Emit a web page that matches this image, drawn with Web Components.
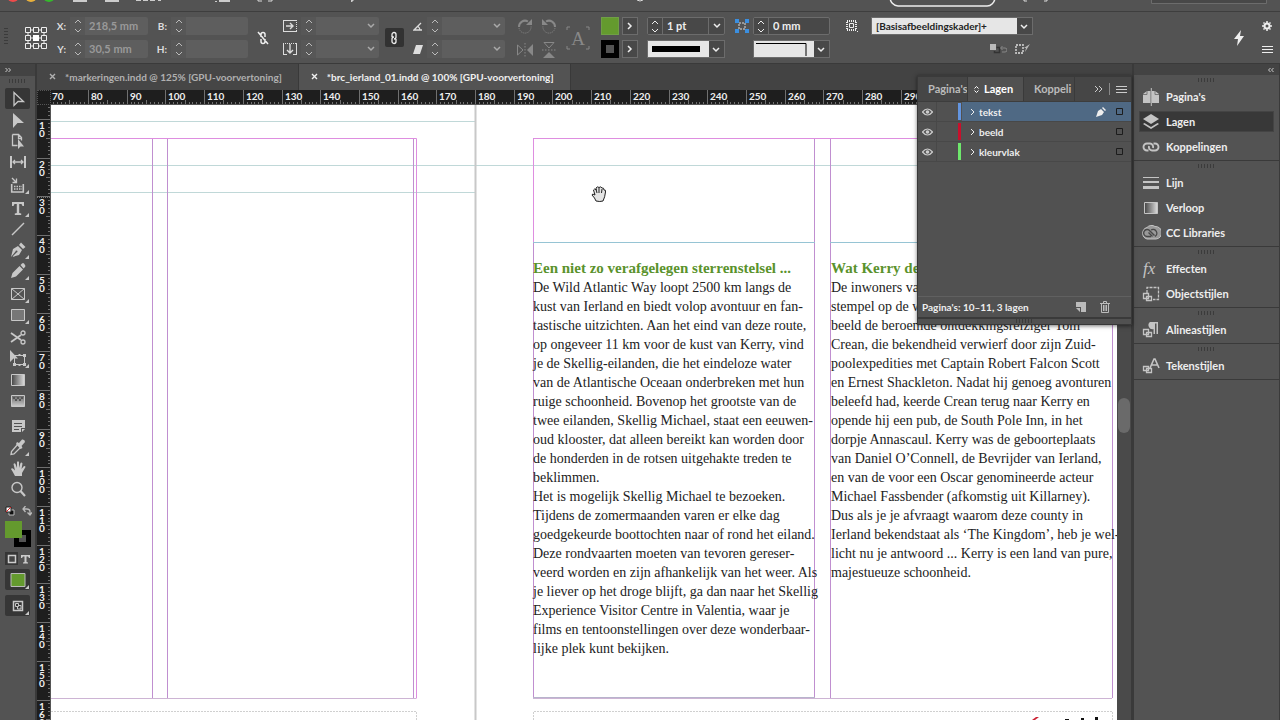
<!DOCTYPE html>
<html lang="nl">
<head>
<meta charset="utf-8">
<title>brc_ierland_01.indd</title>
<style>
html,body{margin:0;height:100%}
body{font:700 10px/14px Lato,"Open Sans",sans-serif;color:#eee;background:#535353;overflow:hidden}
</style>
</head>
<body>
<layout-app></layout-app>
<script>
const base = `*{box-sizing:border-box}button,input,select{font:inherit;color:inherit;margin:0;padding:0;border:0;background:none;border-radius:0;outline:0}button{display:flex;align-items:center;justify-content:center}svg{display:block}`;
const define = (name, render, after) => customElements.define(name, class extends HTMLElement {
  connectedCallback() {
    if (this.shadowRoot) return;
    const root = this.attachShadow({ mode: 'open' });
    root.innerHTML = render(this);
    if (after) after(root, this);
  }
});

/* name: [width, height, markup]; shapes use currentColor */
const S = 'fill="none" stroke="currentColor"';
const F = 'fill="currentColor"';
const icons = {
  ref: [24, 24, `<g ${S}><path d="M7 4h2M15 4h2M7 20h2M15 20h2M4 7v2M4 15v2M20 7v2M20 15v2M7 12h2M15 12h2" /><path d="M1.500 1.500h5v5h-5zM9.500 1.500h5v5h-5zM17.500 1.500h5v5h-5zM1.500 9.500h5v5h-5zM17.500 9.500h5v5h-5zM1.500 17.500h5v5h-5zM9.500 17.500h5v5h-5zM17.500 17.500h5v5h-5z"/></g><path fill="#fff" d="M9 9h6v6H9z"/>`],
  up: [8, 5, `<path d="M1 4l3-3 3 3" ${S}/>`],
  down: [8, 5, `<path d="M1 1l3 3 3-3" ${S}/>`],
  caret: [8, 6, `<path d="M1 1l3 3 3-3" ${S} stroke-width="1.500"/>`],
  right: [6, 8, `<path d="M1 1l3 3-3 3" ${S} stroke-width="1.500"/>`],
  thin: [5, 8, `<path d="M1 1l3 3-3 3" ${S}/>`],
  dright: [9, 8, `<path d="M1 1l3 3-3 3M5 1l3 3-3 3" ${S}/>`],
  dleft: [8, 6, `<path d="M3.500 1l-2 2 2 2M6.500 1l-2 2 2 2" ${S}/>`],
  menu: [11, 9, `<path d="M0 1.500h11M0 4.500h11M0 7.500h11" ${S}/>`],
  unlink: [12, 14, `<path d="M4 6V3.500a2 2 0 0 1 4 0V6M4 8v2.500a2 2 0 0 0 4 0V8M1 1l10 12" ${S} stroke-width="1.500"/>`],
  link: [8, 14, `<path d="M2 6V3.500a2 2 0 0 1 4 0V6a2 2 0 0 1-2 2M6 8v2.500a2 2 0 0 1-4 0V8a2 2 0 0 1 2-2" ${S} stroke-width="1.300"/>`],
  scalex: [14, 12, `<path d="M0 .5h14M0 11.500h14M.5 0v12" ${S}/><path d="M13.500 2v9" ${S} stroke-dasharray="1"/><path d="M3 6h7M7 3l3 3-3 3" ${S} stroke-width="1.400"/>`],
  scaley: [14, 12, `<path d="M.5 0v12M13.500 0v12M0 11.500h4M10 11.500h4" ${S}/><path d="M2 .5h11" ${S} stroke-dasharray="1"/><path d="M7 1v8M4 7l3 3 3-3" ${S} stroke-width="1.400"/>`],
  angle: [10, 9, `<path d="M9 8H1l7-7M5 4.500A5 5 0 0 1 7 8" ${S} stroke-width="1.300"/>`],
  shear: [10, 9, `<path d="M3 0h7L7 9H0z" ${F}/>`],
  rotr: [16, 16, `<path d="M11 3.500A6 6 0 0 0 2 9" ${S} stroke-width="2"/><path d="M2 10a6 6 0 0 0 12-2" ${S} stroke-dasharray="1 1"/><path d="M9 7h6V1z" ${F}/>`],
  rotl: [16, 16, `<path d="M5 3.500A6 6 0 0 1 14 9" ${S} stroke-width="2"/><path d="M14 10A6 6 0 0 1 2 8" ${S} stroke-dasharray="1 1"/><path d="M7 7H1V1z" ${F}/>`],
  fliph: [16, 14, `<path d="M.5 2v10L6 7z" ${S}/><path d="M16 1v12L10 7z" ${F}/><path d="M8 0v14" ${S} stroke-dasharray="1.500"/>`],
  flipv: [14, 16, `<path d="M2 .5h10L7 6z" ${S}/><path d="M1 16h12l-6-6z" ${F}/><path d="M0 8h14" ${S} stroke-dasharray="1.500"/>`],
  aframe: [24, 24, `<path d="M1 4V1h3M20 1h3v3M1 20v3h3M20 23h3v-3" ${S}/><text x="12" y="19" text-anchor="middle" font-family="Liberation Serif" font-weight="400" font-size="19" ${F}>A</text>`],
  corner: [14, 14, `<path d="M4 4h6v6H4z" ${S} stroke-dasharray="2 1"/><path d="M0 0h4v4H0zM10 0h4v4h-4zM0 10h4v4H0zM10 10h4v4h-4z" fill="#3b8fe0"/>`],
  wrap: [14, 12, `<path d="M3 1h9v9H3z" ${S} stroke-dasharray="1 1" stroke-width="2"/><path d="M5.500 3.500h4v4h-4z" ${S}/><path d="M13 11h1v1h-1z" ${F}/>`],
  clear: [17, 10, `<path d="M0 0h6v6H0z" fill="#bbb"/><path d="M6.500 3.500h3v5h-5V7" fill="none" stroke="#333" stroke-width="1.500"/><path d="M11 4h4a1 1 0 0 1 0 4h-3M12.500 2l-2 2 2 2" ${S}/>`],
  redef: [16, 10, `<path d="M1 1h7v8H1z" ${S} stroke-dasharray="2 1" stroke-width="1.800"/><path d="M15 0l-5 8 1-4-2 0z" ${F}/>`],
  bolt: [12, 16, `<path d="M8 0L1 9h4l-1 7 7-10H7z" ${F}/>`],
  gear: [10, 10, `<circle cx="5" cy="5" r="2.500" ${S} stroke-width="2"/><path d="M5 0v2M5 8v2M0 5h2M8 5h2M1.500 1.500l1 1M7.500 7.500l1 1M1.500 8.500l1-1M7.500 2.500l1-1" ${S} stroke-width="1.500"/>`],
  close: [8, 8, `<path d="M1 1l5 5M6 1L1 6" ${S} stroke-width="1.400"/>`],
  select: [18, 18, `<path d="M5 2.500v13l4-4h5.500z" ${S} stroke-width="1.300"/>`],
  direct: [18, 18, `<path d="M4 2v15l4.500-5H15z" ${F}/>`],
  page: [18, 18, `<path d="M3.500 2.500h6l3 3v3M3.500 2.500v11h5M9.500 2.500v4h3" ${S} stroke-width="1.300"/><path d="M9 7v10l2.500-2.500H15z" ${F}/>`],
  gap: [18, 18, `<path d="M2 3v12M16 3v12" ${S} stroke-width="2"/><path d="M4 9h10M6 7L4 9l2 2M12 7l2 2-2 2" ${S} stroke-width="1.300"/>`],
  collect: [18, 18, `<path d="M2.700 8v8h11.600V8" ${S} stroke-width="1.600"/><path d="M5 10.500h8M5 13h8" ${S} stroke-width="1.500" stroke-dasharray="1.500 1"/><path d="M3 2l4 4M7.500 2.500v4h-4" ${S} stroke-width="1.300"/>`],
  type: [18, 18, `<path d="M3 3h12v4h-1.500L12.500 5H10.200v9l2 .5V16H5.800v-1.500l2-.5V5H5.500L4.500 7H3z" ${F}/>`],
  line: [18, 18, `<path d="M3 15L15 3" ${S} stroke-width="1.500"/>`],
  pen: [18, 18, `<path d="M2 16l2-8 5-3 4 4-3 5-7 2 4.500-4.500a1 1 0 1 0-1-1zM10 4l2-2.500L16.500 6 14 8z" ${F}/>`],
  pencil: [18, 18, `<path d="M2 16l1.500-5 7-7 3.500 3.500-7 7zM11.500 3l1.500-1.500a1.500 1.500 0 0 1 2 0L16 3a1.500 1.500 0 0 1 0 2l-1.500 1.500z" ${F}/>`],
  frame: [18, 18, `<path d="M2.500 3.500h13v11h-13zM2.500 3.500l13 11M15.500 3.500l-13 11" ${S}/>`],
  rect: [18, 18, `<path d="M2.500 3.500h13v11h-13z" fill="#777" stroke="currentColor"/>`],
  scissors: [18, 18, `<path d="M2 4l10 7M2 13l10-7" ${S} stroke-width="1.800"/><circle cx="14" cy="4" r="2" ${S} stroke-width="1.300"/><circle cx="14" cy="13" r="2" ${S} stroke-width="1.300"/>`],
  transform: [18, 18, `<path d="M5.500 5.500h10v9h-10z" ${S}/><path d="M14 4h3v3h-3zM14 13h3v3h-3zM4 13h3v3H4zM9.500 4h2v2h-2zM9.500 14h2v2h-2z" ${F}/><path d="M1 0v12l3.500-3.500H9z" ${F}/>`],
  gradient: [18, 18, `<defs><linearGradient id="g"><stop stop-color="#444"/><stop offset="1" stop-color="#ddd"/></linearGradient></defs><path d="M2.500 3.500h13v11h-13z" fill="url(#g)" stroke="currentColor"/>`],
  feather: [18, 18, `<defs><linearGradient id="f" x2="0" y2="1"><stop stop-color="#666"/><stop offset="1" stop-color="#ccc"/></linearGradient></defs><path d="M2.500 3.500h13v11h-13z" fill="url(#f)" stroke="currentColor"/><path d="M4 5h2v2H4zM8 5h2v2H8zM12 5h2v2h-2zM6 7h2v2H6zM10 7h2v2h-2z" fill="#555"/>`],
  note: [18, 18, `<path d="M3 3h13v8h-4v4H3zM13 12h3l-3 3z" ${F}/><path d="M5 6.500h8M5 9.500h8M5 12.500h5" stroke="#535353"/>`],
  eyedrop: [18, 18, `<path d="M9 6l3 3-7 7-3 .5.500-3z" ${S} stroke-width="1.300"/><path d="M8 4l2 1 3-3.500q3-.5 3 2.500L12.500 8l1 2-2 1L7 6z" ${F}/>`],
  hand: [18, 18, `<path d="M6 17q-2-4-4-7 1-1.500 2.500 0L6 11.500 4.500 5q1-1.500 2 0L8 9V3q1-1.500 2 0v6l1.500-5q1.200-1 2 .5L12.500 10 15 7q1.500 0 1.500 1L13 14v3z" ${F}/>`],
  zoom: [18, 18, `<circle cx="8" cy="7.500" r="5" ${S} stroke-width="1.400"/><path d="M11.500 11L16 16" ${S} stroke-width="2.200"/>`],
  reset: [10, 10, `<path d="M4 4h5v5H4z" fill="#111" stroke="#bbb"/><path d="M1 1h5v5H1z" fill="#fff" stroke="#222"/><path d="M1 6l5-5" stroke="#d22"/>`],
  swap: [10, 10, `<path d="M2 3h3a3 3 0 0 1 3 3v2M3.500 0L1 3l2.500 3M5.500 6.500L8 9l2-2.500" ${S} stroke-width="1.300"/>`],
  box: [10, 10, `<path d="M1.500 1.500h7v7h-7z" fill="#444" stroke="currentColor" stroke-width="1.500"/>`],
  tee: [9, 10, `<path d="M0 1h9v3H8L7 2.500H5.500V8L7 8.500v1H2v-1L3.500 8V2.500H2L1 4H0z" ${F}/>`],
  green: [16, 14, `<path d="M1 .5h14v13H1z" fill="#649a2e" stroke="#bbb"/>`],
  preview: [12, 12, `<path d="M1.500 1.500h9v9h-9z" ${S} stroke-width="1.500"/><path d="M3.500 3.500h3v3h-3zM6 5.500h3V9H5.500V7" ${S}/>`],
  pages: [18, 18, `<path d="M1 6l4-3h3.500v12H1zM10 3h3l4 3v9h-7z" ${F}/><path d="M9.300 0v18" ${S}/><path d="M1 6.500h4V3M17 6.500h-4V3" stroke="#777" fill="none"/>`],
  layers: [18, 18, `<path d="M9 1l8 5-8 5-8-5z" ${F}/><path d="M2.500 10L1 11l8 5 8-5-1.500-1L9 14z" ${F}/>`],
  chain: [18, 18, `<path d="M6.500 12.500H5a3.500 3.500 0 0 1 0-7h3a3.500 3.500 0 0 1 3 4.500M11.500 5.500H13a3.500 3.500 0 0 1 0 7h-3A3.500 3.500 0 0 1 7 8" ${S} stroke-width="1.900"/>`],
  stroke: [18, 18, `<path d="M1 3.500h16" ${S}/><path d="M1 8h16" ${S} stroke-width="2"/><path d="M1 13.500h16" ${S} stroke-width="3"/>`],
  cc: [20, 16, `<path d="M6 2.500a6 6 0 0 1 8-1 6 6 0 0 1 1 12.500H6A6 6 0 0 1 6 2.500z" fill="#999" stroke="currentColor"/><path d="M10 11.500H6a3.500 3.500 0 1 1 3-5.500l4.500 4.500M7.500 7.500l4 4M10 5a3.500 3.500 0 1 1 4 6.500" fill="none" stroke="#484848" stroke-width="1.400"/>`],
  fx: [18, 18, `<text x="1" y="14" font-family="Liberation Serif" font-style="italic" font-weight="400" font-size="17" ${F}>fx</text>`],
  obj: [18, 18, `<path d="M5 8V2.500h11.500v12H11" ${S} stroke-dasharray="3 1" stroke-width="1.300"/><path d="M1.500 8.500h5v5h-5zM4.500 11.500h5v4h-5z" ${S} stroke-width="1.300"/>`],
  para: [18, 18, `<path d="M8 1h8v12h-1.500V2.500h-1.500V13h-1.500V8A4 4 0 0 1 8 1z" ${F}/><path d="M1.500 8.500h5v5h-5zM4.500 11.500h5v4h-5z" ${S} stroke-width="1.300"/>`],
  char: [18, 18, `<path d="M8 11l4-9h1l4 9M9.500 8h6" ${S} stroke-width="1.600"/><path d="M1.500 9.500h5v4h-5zM4.500 11.500h5v4h-5z" ${S} stroke-width="1.300"/>`],
  eye: [11, 8, `<path d="M.5 4q5-6 10 0-5 6-10 0z" ${S} stroke-width="1.200"/><circle cx="5.500" cy="4" r="1.800" ${F}/>`],
  nib: [10, 10, `<path d="M0 10l2-6 3-2 3 3-2 3zM6 1l1-1 3 3-1 1z" ${F}/>`],
  sq: [7, 7, `<path d="M.5.5h6v6h-6z" fill="none" stroke="#1c1c1c"/>`],
  newl: [10, 10, `<path d="M0 0h10v10H5V5H0z" ${F}/><path d="M0 6h4v4z" ${F}/>`],
  trash: [10, 12, `<path d="M0 2.500h10M3.500 2V.5h3V2M1.500 3v8.500h7V3M3.500 4v6M5 4v6M6.500 4v6" ${S}/>`],
  sort: [5, 9, `<path d="M.5 3.500l2-2 2 2M.5 5.500l2 2 2-2" ${S}/>`],
  grab: [16, 18, `<path d="M5 16q-1-3-4-6 0-2 3 0L2.500 5q1-2 2.500 0V3q1.500-2 3-.500 2-1.500 3 .500 2-.5 2 2 2-.5 1.500 2-.5 5-2.500 9-3 1-7 0z" fill="#e4e4e4" stroke="#222"/><path d="M5 4l1 4M8 3v5M11 4l-.5 4" stroke="#222"/>`]
};
define('ui-icon', h => {
  const [w, ht, m] = icons[h.getAttribute('name')];
  return `<style>${base}:host{display:inline-block;width:${w}px;height:${ht}px;flex:none}</style><svg width="${w}" height="${ht}" viewBox="0 0 ${w} ${ht}" aria-hidden="true">${m}</svg>`;
});

define('panel-grip', () => `<style>:host{display:block;width:18px;height:4px;background:repeating-linear-gradient(90deg,#3b3b3b 0 1px,transparent 1px 3px)}</style>`);

/* Number box with a stepper, a text or icon label and an optional drop-down arrow */
define('num-field', h => {
  const lab = h.getAttribute('label') || '', ic = h.getAttribute('icon'), name = h.getAttribute('name') || lab;
  return `<style>${base}
  :host{display:flex;align-items:center;height:18px}
  label{width:var(--label,22px);padding-right:4px;display:flex;justify-content:flex-end;flex:none;color:#ddd}
  .box{flex:1;display:flex;height:18px;min-width:0;background:#5e5e5e;border-radius:2px;color:#999;font-size:11px}
  :host([live]) .box{background:#484848;border:1px solid #6c6c6c;color:#eee}
  .step{width:15px;display:flex;flex-direction:column;justify-content:space-around;align-items:center;background:#575757;color:#bbb;flex:none}
  :host([live]) .step{background:#484848;border-right:1px solid #6c6c6c;color:#eee}
  input{flex:1;width:0;min-width:0;padding-left:4px}
  .drop{width:16px;flex:none;color:#aaa}:host([live]) .drop{border-left:1px solid #6c6c6c;color:#eee}
  </style><label for="v">${ic ? `<ui-icon name="${ic}"></ui-icon>` : lab}</label>
  <div class="box"><div class="step"><button aria-label="${name} omhoog"><ui-icon name="up"></ui-icon></button><button aria-label="${name} omlaag"><ui-icon name="down"></ui-icon></button></div>
  <input id="v" aria-label="${name}" value="${h.getAttribute('value') || ''}">${h.hasAttribute('drop') ? `<button class="drop" aria-label="${name} kiezen"><ui-icon name="caret"></ui-icon></button>` : ''}</div>`;
});

define('pick-field', h => `<style>${base}
  :host{display:flex;height:18px;border:1px solid #6c6c6c;position:relative;background:#484848}
  select{appearance:none;flex:1;height:16px;background:#e6e6e6;color:#222;padding:0 4px;margin-right:15px;font-size:10px;width:0}
  ui-icon{position:absolute;right:4px;top:6px;pointer-events:none}
  </style><select aria-label="${h.getAttribute('name')}"><option>${h.getAttribute('value') || ''}</option></select><slot></slot><ui-icon name="caret"></ui-icon>`);

define('menu-strip', () => `<style>${base}:host{display:block;height:12px;overflow:hidden;border-bottom:1px solid #3e3e3e;background:#535353}</style>
  <svg width="1280" height="11" aria-hidden="true">
  <circle cx="13" cy="-4" r="6" fill="#ee4b4b"/><circle cx="31" cy="-4" r="6" fill="#e8b03c"/><circle cx="49" cy="-4" r="6" fill="#35b82c"/>
  <path d="M73 0h14v2H73zM105 0h14v2h-14zM219 0h11v2h-11zM215 1h2v1h-2zM136 0h5v1h-5zM143 0h5v1h-5zM150 0h5v1h-5zM158 0h3v1h-3zM351 0h3l-2 2h-1z" fill="#ccc"/>
  <path d="M258 0v1h4M272 0v1h-4M637 0q3 2 6 0M1024 0v1h3M1047 0v1h-3" fill="none" stroke="#ddd"/>
  <path d="M890-3a8 9 0 0 0 8 9h88a8 9 0 0 0 9-9" fill="none" stroke="#eee" stroke-width="1.500"/>
  <path d="M1151.500 0v3.500h115V0" fill="#484848" stroke="#6c6c6c"/></svg>`);

define('control-bar', () => `<style>${base}
  :host{display:grid;grid-template-columns:24px 100px 100px 30px 101px 30px 96px 55px 36px 24px 27px 78px 105px 41px 162px 1fr 30px 26px;height:52px;padding:0 0 0 24px;background:#535353;border-bottom:1px solid #3a3a3a;align-items:center;position:relative}
  panel-grip{position:absolute;left:-3px;top:23px;transform:rotate(90deg)}
  .stack{display:grid;row-gap:5px;align-content:center}
  .mid{display:flex;justify-content:center;align-items:center}
  .row{height:18px}
  .b{--label:23px}.c{--label:23px}.d{--label:18px}
  .pairs{display:grid;grid-template-columns:16px 16px;gap:8px;justify-content:end;align-items:center;justify-items:center;padding-right:3px;color:#888}
  .tog{width:19px;height:19px;background:#323232;border-radius:2px}
  .sw{width:18px;height:18px;margin-left:5px;background:#649a2e;border:1px solid #6f9f45}
  .sw.k{background:#535353;border:5px solid #000}
  .arr{width:16px;height:18px;margin-left:2px;border:1px solid #6c6c6c;background:#484848}
  .w{--label:4px}.w num-field{margin-left:-4px}
  .corner{--label:28px}.corner pick-field{margin-left:28px}
  .art{position:absolute;left:0;top:0;pointer-events:none}
  .opt{display:flex;justify-content:flex-end;gap:8px;align-items:center;height:18px;padding-right:2px;color:#bbb}
  .dim{color:#888}
  .end{display:grid;row-gap:14px;justify-items:center}
  </style>
  <panel-grip></panel-grip>
  <div class="mid"><ui-icon name="ref"></ui-icon></div>
  <div class="stack"><num-field label="X:" value="218,5 mm"></num-field><num-field label="Y:" value="30,5 mm"></num-field></div>
  <div class="stack b"><num-field label="B:"></num-field><num-field label="H:"></num-field></div>
  <div class="mid"><ui-icon name="unlink"></ui-icon></div>
  <div class="stack c"><num-field icon="scalex" name="Schaal X" drop></num-field><num-field icon="scaley" name="Schaal Y" drop></num-field></div>
  <div class="mid"><button class="tog" aria-label="Verhoudingen behouden"><ui-icon name="link"></ui-icon></button></div>
  <div class="stack d"><num-field icon="angle" name="Rotatie" drop></num-field><num-field icon="shear" name="Schuintrekken" drop></num-field></div>
  <div class="pairs"><ui-icon name="rotr"></ui-icon><ui-icon name="rotl"></ui-icon><ui-icon name="fliph"></ui-icon><ui-icon name="flipv"></ui-icon></div>
  <div class="mid dim"><ui-icon name="aframe"></ui-icon></div>
  <div class="stack"><div class="sw"></div><div class="sw k"></div></div>
  <div class="stack"><button class="arr" aria-label="Vulling"><ui-icon name="right"></ui-icon></button><button class="arr" aria-label="Lijn"><ui-icon name="right"></ui-icon></button></div>
  <div class="stack w"><num-field live name="Lijndikte" value="1 pt" drop></num-field><pick-field name="Lijntype"><svg class="art" width="60" height="16"><path d="M4 5h48v6H4z"/></svg></pick-field></div>
  <div class="stack corner"><num-field live icon="corner" name="Hoekgrootte" value="0 mm"></num-field><pick-field name="Hoekvorm"><svg class="art" width="60" height="16"><path d="M2 2.500h50V15" fill="none" stroke="#000"/></svg></pick-field></div>
  <div class="stack"><div class="mid row"><ui-icon name="wrap"></ui-icon></div><div class="row"></div></div>
  <div class="stack"><pick-field name="Objectstijl" value="[Basisafbeeldingskader]+"></pick-field><div class="opt"><ui-icon class="dim" name="clear"></ui-icon><ui-icon name="redef"></ui-icon></div></div>
  <div></div>
  <div class="mid"><ui-icon name="bolt"></ui-icon></div>
  <div class="end"><ui-icon name="gear"></ui-icon><ui-icon name="menu"></ui-icon></div>`);

define('tool-button', h => `<style>${base}:host{display:block}
  button{position:relative;width:25px;height:21px;color:#c8c8c8;border-radius:2px}
  :host([on]) button{background:#363636}
  :host([more]) button::after{content:"";position:absolute;right:1px;bottom:1px;border:2px solid;border-color:transparent #c8c8c8 #c8c8c8 transparent}
  </style><button aria-label="${h.getAttribute('label')}"><ui-icon name="${h.getAttribute('icon')}"></ui-icon></button>`);

const t = (icon, label, extra = '') => `<tool-button icon="${icon}" label="${label}" ${extra}></tool-button>`;
define('tool-box', () => `<style>${base}
  :host{display:flex;flex-direction:column;background:#535353;border-right:2px solid #3a3a3a}
  .head{height:12px;background:#434343;display:flex;align-items:center;padding-left:4px;color:#ccc}
  .head ui-icon{transform:scale(-1,1)}
  panel-grip{margin:3px 0 5px 9px}
  .group{padding-left:5px;margin-bottom:2px}.last{margin-bottom:5px;margin-top:2px}
  .row{display:flex;gap:7px;padding-left:5px;height:13px;align-items:center;color:#bbb}
  .fs{display:grid;grid-template-columns:9px 8px 9px;grid-template-rows:9px 8px 9px;margin:4px 0 4px 5px}
  .fill{grid-area:1/1/3/3;background:#649a2e;z-index:1}.str{grid-area:2/2/4/4;border:5px solid #000}
  .pair{display:flex;gap:3px;padding-left:5px;height:15px;align-items:center;color:#ccc;margin-bottom:3px}
  .pair span{width:13px;height:13px;background:#363636;display:flex;align-items:center;justify-content:center}
  .view{padding-left:5px;display:grid;row-gap:5px}
  </style><div class="head"><ui-icon name="dleft"></ui-icon></div><panel-grip></panel-grip>
  <div class="group">${t('select', 'Selecteren', 'on')}${t('direct', 'Direct selecteren')}${t('page', 'Pagina')}${t('gap', 'Tussenruimte')}</div>
  <div class="group">${t('collect', 'Inhoud verzamelen', 'more')}</div>
  <div class="group">${t('type', 'Tekst', 'more')}${t('line', 'Lijn')}${t('pen', 'Pen', 'more')}${t('pencil', 'Potlood', 'more')}</div>
  <div class="group">${t('frame', 'Rechthoekig kader', 'more')}${t('rect', 'Rechthoek', 'more')}</div>
  <div class="group">${t('scissors', 'Schaar')}${t('transform', 'Vrije transformatie', 'more')}${t('gradient', 'Verloop')}${t('feather', 'Verloopdoezelaar')}</div>
  <div class="group last">${t('note', 'Notitie')}${t('eyedrop', 'Pipet', 'more')}${t('hand', 'Handje')}${t('zoom', 'Zoomen')}</div>
  <div class="row"><ui-icon name="reset"></ui-icon><ui-icon name="swap"></ui-icon></div>
  <div class="fs"><div class="fill"></div><div class="str"></div></div>
  <div class="pair"><span><ui-icon name="box"></ui-icon></span><ui-icon name="tee"></ui-icon></div>
  <div class="view">${t('green', 'Kleur toepassen', 'on more')}${t('preview', 'Schermmodus', 'on more')}</div>`);

define('doc-tab', h => `<style>${base}:host{display:block}
  button{height:26px;padding:0 16px 0 12px;gap:8px;color:#b0b0b0;background:#464646;border-right:1px solid #393939;white-space:nowrap}
  :host([active]) button{background:#535353;color:#f0f0f0}
  </style><button><ui-icon name="close"></ui-icon><slot></slot></button>`);

/* Rulers: 10 mm is 38.7 px at this zoom */
const STEP = 3.87;
define('ruler-x', () => `<style>${base}:host{display:block;height:15px;overflow:hidden;background:#1e1e1e;border-bottom:1px solid #555}svg{font:700 10px Lato,sans-serif}</style><svg width="1200" height="14"></svg>`,
  root => {
    let s = '';
    for (let v = 70; v < 300; v++) {
      const x = Math.round(424 + (v - 180) * STEP), big = v % 10 === 0;
      s += `<path d="M${x} ${big ? 0 : v % 5 === 0 ? 10 : 12}h1v14h-1z" fill="#707070"/>`;
      if (big) s += `<text x="${v === 70 ? 1 : x + 3}" y="10" fill="#eee">${v}</text>`;
    }
    root.querySelector('svg').innerHTML = s;
  });
define('ruler-y', () => `<style>${base}:host{display:block;overflow:hidden;background:#1e1e1e;border-right:1px solid #555}svg{font:700 10px Lato,sans-serif}</style><svg width="13" height="900"></svg>`,
  root => {
    let s = '<path d="M0 92h13" stroke="#ccc" stroke-dasharray="1"/>';
    for (let v = 7; v < 170; v++) {
      const y = Math.round(14 + (v - 10) * STEP), big = v % 10 === 0;
      s += `<path d="M${big ? 0 : v % 5 === 0 ? 9 : 11} ${y}h14v1h-14z" fill="#707070"/>`;
      if (big) s += `<text y="${y + 10}" fill="#eee">${[...String(v)].map((d, i) => `<tspan x="2" dy="${i ? 8 : 0}">${d}</tspan>`).join('')}</text>`;
    }
    root.querySelector('svg').innerHTML = s;
  });

define('text-frame', () => `<style>:host{display:block;font:400 14px/19px "Liberation Serif",serif;color:#222;white-space:nowrap}</style><slot></slot>`);

define('page-spread', () => `<style>${base}
  :host{display:block;position:relative;overflow:hidden;background:#fff;min-width:0}
  .guides{position:absolute;left:0;top:0}
  .cols{position:relative;display:grid;grid-template-columns:282px 282px;column-gap:16px;padding:153px 0 0 482px}
  .cursor{position:absolute;left:540px;top:80px}
  h2,p{margin:0}
  h2{font:700 15px/20px "Liberation Serif",serif;color:#5a922c}
  </style>
  <svg class="guides" width="1066" height="615" aria-hidden="true" fill="none">
    <path d="M0 16.500h424M0 87.500h424M0 60.500h1066" stroke="#c0d8d8"/>
    <path d="M424.500 0v615" stroke="#c8c8c8" stroke-width="2"/>
    <path d="M101.500 33v560M116.500 33v560M362.500 33v560M763.500 33v560M779.500 33v560M482.500 33v560M1061.500 33v560" stroke="#c08fd0"/>
    <path d="M0 33.500h365.500v560M482.500 138V33.500h579" stroke="#de8ee0"/>
    <path d="M0 593.500h365M482 593.500h579" stroke="#cdb4d4"/>
    <path d="M482 137.500h282M779 137.500h282" stroke="#96c4d4"/>
    <path d="M482 592.500h282" stroke="#b8b4cc"/>
    <path d="M0 606.500h365.500v9M482.500 615v-8.500h579V615" stroke="#d0d0d0" stroke-dasharray="2 1"/>
    <path d="M981 615l4-3 3 0-4 3z" fill="#c23"/><path d="M1014 614h4v1h-4zM1030 613h3v2h-3zM1044 612h3v3h-3z" fill="#111"/>
  </svg>
  <div class="cols">
    <text-frame><h2>Een niet zo verafgelegen sterrenstelsel ...</h2><p>De Wild Atlantic Way loopt 2500 km langs de<br>kust van Ierland en biedt volop avontuur en fan-<br>tastische uitzichten. Aan het eind van deze route,<br>op ongeveer 11 km voor de kust van Kerry, vind<br>je de Skellig-eilanden, die het eindeloze water<br>van de Atlantische Oceaan onderbreken met hun<br>ruige schoonheid. Bovenop het grootste van de<br>twee eilanden, Skellig Michael, staat een eeuwen-<br>oud klooster, dat alleen bereikt kan worden door<br>de honderden in de rotsen uitgehakte treden te<br>beklimmen.</p><p>Het is mogelijk Skellig Michael te bezoeken.<br>Tijdens de zomermaanden varen er elke dag<br>goedgekeurde boottochten naar of rond het eiland.<br>Deze rondvaarten moeten van tevoren gereser-<br>veerd worden en zijn afhankelijk van het weer. Als<br>je liever op het droge blijft, ga dan naar het Skellig<br>Experience Visitor Centre in Valentia, waar je<br>films en tentoonstellingen over deze wonderbaar-<br>lijke plek kunt bekijken.</p></text-frame>
    <text-frame><h2>Wat Kerry de</h2><p>De inwoners van<br>stempel op de wereld<br>beeld de beroemde ontdekkingsreiziger Tom<br>Crean, die bekendheid verwierf door zijn Zuid-<br>poolexpedities met Captain Robert Falcon Scott<br>en Ernest Shackleton. Nadat hij genoeg avonturen<br>beleefd had, keerde Crean terug naar Kerry en<br>opende hij een pub, de South Pole Inn, in het<br>dorpje Annascaul. Kerry was de geboorteplaats<br>van Daniel O’Connell, de Bevrijder van Ierland,<br>en van de voor een Oscar genomineerde acteur<br>Michael Fassbender (afkomstig uit Killarney).<br>Dus als je je afvraagt waarom deze county in<br>Ierland bekendstaat als ‘The Kingdom’, heb je wel-<br>licht nu je antwoord ... Kerry is een land van pure,<br>majestueuze schoonheid.</p></text-frame>
  </div>
  <ui-icon class="cursor" name="grab"></ui-icon>`);

define('doc-window', () => `<style>${base}
  :host{display:grid;grid-template-rows:26px 15px 1fr;grid-template-columns:14px 1fr 15px;min-width:0;min-height:0;background:#434343}
  .tabs{grid-column:1/-1;display:flex}
  .corner{background:#1e1e1e;border:1px dotted #555}
  ruler-x{grid-column:2/-1}
  ruler-x,ruler-y,page-spread{min-width:0;min-height:0}
  .bar{background:#4a4a4a;border-right:1px solid #3a3a3a;padding:293px 1px 0;display:block}
  .thumb{height:35px;border-radius:6px;background:#6a6a6a}
  </style>
  <div class="tabs"><doc-tab>*markeringen.indd @ 125% [GPU-voorvertoning]</doc-tab><doc-tab active>*brc_ierland_01.indd @ 100% [GPU-voorvertoning]</doc-tab></div>
  <div class="corner"></div><ruler-x></ruler-x><ruler-y></ruler-y><page-spread></page-spread><div class="bar"><div class="thumb"></div></div>`);

define('layer-row', h => `<style>${base}
  :host{display:flex;height:20px;align-items:center;border-bottom:1px solid #484848;color:#eee}
  .eye{width:19px;height:100%;border-right:1px solid #484848;color:#ccc}
  .lock{width:21px}
  .col{width:3px;height:17px;background:${h.getAttribute('color')}}
  .name{flex:1;align-self:stretch;display:flex;align-items:center;gap:4px;padding:0 8px;margin-left:1px}
  .name span{flex:1}:host([on]) .name{background:#4f6984}
  .name ui-icon:last-child{margin-left:6px}
  </style><button class="eye" aria-label="Zichtbaarheid"><ui-icon name="eye"></ui-icon></button><div class="lock"></div><div class="col"></div>
  <div class="name"><ui-icon name="thin"></ui-icon><span><slot></slot></span>${h.hasAttribute('on') ? '<ui-icon name="nib"></ui-icon>' : ''}<ui-icon name="sq"></ui-icon></div>`);

define('layers-panel', () => `<style>${base}
  :host{display:flex;flex-direction:column;background:#515151;border:1px solid #383838;border-top:2px solid #3a3a3a;box-shadow:0 1px 4px #0008}
  .tabs{display:flex;height:25px;background:#464646;align-items:stretch;font-size:11px;border-bottom:1px solid #3d3d3d}
  .tabs button{color:#bbb;overflow:hidden;white-space:nowrap;flex:none;justify-content:flex-start;border-right:1px solid #3a3a3a}
  .p{width:50px;padding-left:10px}.l{width:56px;padding-left:6px;gap:5px}.k{width:51px;padding-left:10px}
  .tabs .l{background:#515151;color:#fff}
  .tabs div{flex:1;display:flex;align-items:center;justify-content:flex-end;gap:6px;padding-right:4px;color:#ccc}
  .tabs i{width:1px;height:12px;background:#888}
  .list{flex:1}
  .foot{display:flex;align-items:center;height:21px;border-top:1px solid #606060;padding:0 21px 0 4px}
  .foot span{flex:1}.foot ui-icon{margin-left:14px;color:#bbb}
  .size{height:7px;border-top:2px solid #3a3a3a;display:flex;justify-content:center}
  </style>
  <div class="tabs"><button class="p">Pagina's</button><button class="l"><ui-icon name="sort"></ui-icon>Lagen</button><button class="k">Koppeli</button><div><ui-icon name="dright"></ui-icon><i></i><ui-icon name="menu"></ui-icon></div></div>
  <div class="list"><layer-row on color="#6395e0">tekst</layer-row><layer-row color="#c8102c">beeld</layer-row><layer-row color="#6ee86c">kleurvlak</layer-row></div>
  <div class="foot"><span>Pagina's: 10–11, 3 lagen</span><ui-icon name="newl"></ui-icon><ui-icon name="trash"></ui-icon></div>
  <div class="size"><panel-grip></panel-grip></div>`);

define('dock-item', h => `<style>${base}:host{display:block;height:25px;padding:2px 5px}
  button{width:100%;height:21px;justify-content:flex-start;padding-left:1px;gap:5px;font-size:11px;border:1px solid transparent;color:#eee}
  .i{width:20px;display:flex;justify-content:center;color:#c4c4c4}
  :host([on]) button{background:#383838;border-color:#444}
  </style><button><span class="i"><ui-icon name="${h.getAttribute('icon')}"></ui-icon></span><slot></slot></button>`);

define('dock-group', () => `<style>:host{display:block;border-bottom:1px solid #3a3a3a;padding-bottom:1px}panel-grip{margin:3px auto 2px}</style><panel-grip></panel-grip><slot></slot>`);

define('panel-dock', () => `<style>${base}
  :host{display:block;background:#535353;border-left:2px solid #3a3a3a;border-right:1px solid #3a3a3a}
  .head{height:11px;background:#434343;display:flex;justify-content:flex-end;align-items:center;padding-right:4px;color:#ccc}
  </style><div class="head"><ui-icon name="dleft"></ui-icon></div>
  <dock-group><dock-item icon="pages">Pagina's</dock-item><dock-item icon="layers" on>Lagen</dock-item><dock-item icon="chain">Koppelingen</dock-item></dock-group>
  <dock-group><dock-item icon="stroke">Lijn</dock-item><dock-item icon="gradient">Verloop</dock-item><dock-item icon="cc">CC Libraries</dock-item></dock-group>
  <dock-group><dock-item icon="fx">Effecten</dock-item><dock-item icon="obj">Objectstijlen</dock-item></dock-group>
  <dock-group><dock-item icon="para">Alineastijlen</dock-item></dock-group>
  <dock-group><dock-item icon="char">Tekenstijlen</dock-item></dock-group>`);

define('layout-app', () => `<style>${base}
  :host{display:grid;grid-template-rows:auto auto 1fr;height:100vh;overflow:hidden}
  main{display:grid;grid-template-columns:37px 1fr 148px;min-height:0;position:relative}
  main>*{min-height:0}
  layers-panel{position:absolute;right:148px;top:11px;width:215px;height:250px}
  </style><menu-strip></menu-strip><control-bar></control-bar>
  <main><tool-box></tool-box><doc-window></doc-window><panel-dock></panel-dock><layers-panel></layers-panel></main>`);
</script>
</body>
</html>
